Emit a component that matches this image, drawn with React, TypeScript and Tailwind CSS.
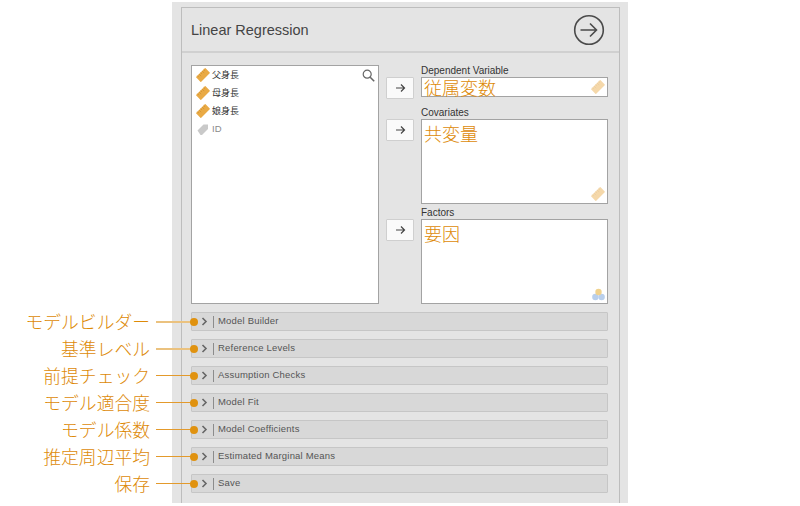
import React, { FC } from 'react';

const RulerIcon: FC<{ faded?: boolean }> = ({ faded }) => (
  <svg width="14" height="14" viewBox="0 0 14 14" className={faded ? 'opacity-45' : ''}>
    <g transform="rotate(-45 7 7)">
      <rect x="0.4" y="3.5" width="13.2" height="7" rx="0.6" fill="#e9aa45" />
      <path
        d="M2.6 3.5v2M4.8 3.5v3M7 3.5v2M9.2 3.5v3M11.4 3.5v2"
        stroke="#c98a2a"
        strokeWidth="0.6"
      />
    </g>
  </svg>
);

const NominalTextIcon: FC = () => (
  <svg width="14" height="14" viewBox="0 0 14 14">
    <path d="M1.5 8.5 7.5 2.5h4.5v4.5L6 13H4.5z" fill="#c9c9c9" />
  </svg>
);

const FactorIcon: FC = () => (
  <svg width="13" height="13" viewBox="0 0 13 13">
    <circle cx="3.4" cy="9" r="3.2" fill="#b9cfec" />
    <circle cx="9.6" cy="9" r="3.2" fill="#b9cfec" />
    <circle cx="6.5" cy="4" r="3.2" fill="#f0d28e" />
  </svg>
);

const SmallArrow: FC = () => (
  <svg width="11" height="10" viewBox="0 0 11 10" fill="none" stroke="#444" strokeWidth="1.2">
    <path d="M1 5h8.5M6 1.5 9.5 5 6 8.5" />
  </svg>
);

const AddButton: FC = () => (
  <button className="mt-[12px] flex h-[22px] w-[28px] shrink-0 items-center justify-center rounded-[1px] border border-[#cfcfcf] bg-[#fafafa]">
    <SmallArrow />
  </button>
);

const TargetRow: FC<{
  label: string;
  hint: string;
  boxClass: string;
  icon: React.ReactNode;
}> = ({ label, hint, boxClass, icon }) => (
  <div className="flex gap-[7px]">
    <AddButton />
    <div className="w-[187px]">
      <div className="h-[12px] text-[10px] leading-[12px] text-[#333]">{label}</div>
      <div className={`relative border border-[#a3a3a3] bg-white pl-[2px] ${boxClass}`}>
        <span className="block font-['Noto_Sans_CJK_JP',sans-serif] text-[18px] leading-[18px] font-light text-[#dd8a08]">
          {hint}
        </span>
        <span className="absolute right-[2px] bottom-[2px] flex">{icon}</span>
      </div>
    </div>
  </div>
);

const options = [
  { title: 'Model Builder', note: 'モデルビルダー', soft: true },
  { title: 'Reference Levels', note: '基準レベル', soft: true },
  { title: 'Assumption Checks', note: '前提チェック' },
  { title: 'Model Fit', note: 'モデル適合度' },
  { title: 'Model Coefficients', note: 'モデル係数' },
  { title: 'Estimated Marginal Means', note: '推定周辺平均' },
  { title: 'Save', note: '保存' },
];

const OptionRow: FC<{ title: string; note: string; soft?: boolean }> = ({ title, note, soft }) => (
  <div className="relative flex h-[19px] items-center rounded-[1px] border border-[#c6c6c6] bg-[#d8d8d8]">
    <div className="absolute top-1/2 right-[calc(100%-6px)] flex -translate-y-1/2 items-center">
      <span className="-translate-y-px font-['Noto_Sans_CJK_JP',sans-serif] text-[17.8px] leading-[20px] font-light whitespace-nowrap text-[#dd8a08]">
        {note}
      </span>
      <span className={soft ? 'ml-[6px] h-[2px] w-[36px] bg-[#ebc27f]' : 'ml-[6px] h-px w-[36px] bg-[#e39a2c]'} />
      <span className="-ml-[2px] h-[8px] w-[8px] rounded-full bg-[#e0920f]" />
    </div>
    <svg width="7" height="9" viewBox="0 0 7 9" fill="none" stroke="#666" strokeWidth="1.6" className="ml-[9px]">
      <path d="M1.5 1 5 4.5 1.5 8" />
    </svg>
    <span className="ml-[5px] h-[12px] w-px bg-[#8c8c8c]" />
    <span className="ml-[4px] text-[9.5px] tracking-[0.2px] text-[#555]">{title}</span>
  </div>
);

export default function App() {
  return (
    <div className="h-[506px] w-[800px] overflow-hidden bg-white font-['Liberation_Sans',sans-serif]">
      <div className="mt-[2px] ml-[172px] h-[501px] w-[456px] bg-[#e4e4e4] pt-[5px] pl-[9px]">
        <div className="h-[496px] w-[439px] border-x border-t border-[#bdbdbd]">
          <header className="flex h-[45px] items-center justify-between border-b-2 border-[#d0d0d0] pr-[14px] pl-[9px]">
            <h1 className="mt-[3px] text-[14.5px] text-[#444]">Linear Regression</h1>
            <svg width="32" height="32" viewBox="0 0 32 32" fill="none" stroke="#4a4a4a">
              <circle cx="16" cy="16" r="14.3" strokeWidth="1.6" />
              <path d="M7.5 16h16M17 9.5 23.5 16 17 22.5" strokeWidth="1.6" />
            </svg>
          </header>

          <div className="pt-[12px] pr-[11px] pl-[9px]">
            <div className="flex gap-[7px]">
              <div className="relative h-[239px] w-[188px] border border-[#a3a3a3] bg-white pl-[4px]">
                <svg
                  width="13"
                  height="13"
                  viewBox="0 0 13 13"
                  fill="none"
                  stroke="#666"
                  strokeWidth="1.2"
                  className="absolute top-[3px] right-[3px]"
                >
                  <circle cx="5.2" cy="5.2" r="4" />
                  <path d="m8.2 8.2 4 4" strokeWidth="1.6" />
                </svg>
                {['父身長', '母身長', '娘身長'].map(name => (
                  <div key={name} className="flex h-[18px] items-center gap-[2px]">
                    <RulerIcon />
                    <span className="font-['Noto_Sans_CJK_JP',sans-serif] text-[9px] text-[#333]">{name}</span>
                  </div>
                ))}
                <div className="flex h-[18px] items-center gap-[2px]">
                  <NominalTextIcon />
                  <span className="text-[9.5px] text-[#8a8a8a]">ID</span>
                </div>
              </div>

              <div className="flex flex-col">
                <TargetRow label="Dependent Variable" hint="従属変数" boxClass="h-[20px]" icon={<RulerIcon faded />} />
                <div className="mt-[8px]">
                  <TargetRow label="Covariates" hint="共変量" boxClass="h-[85px] pt-[4px]" icon={<RulerIcon faded />} />
                </div>
                <div className="mt-[3px]">
                  <TargetRow label="Factors" hint="要因" boxClass="h-[85px] pt-[4px]" icon={<FactorIcon />} />
                </div>
              </div>
            </div>

            <div className="mt-[8px] flex flex-col gap-[8px]">
              {options.map(option => (
                <OptionRow key={option.title} {...option} />
              ))}
            </div>
          </div>
        </div>
      </div>
    </div>
  );
}
